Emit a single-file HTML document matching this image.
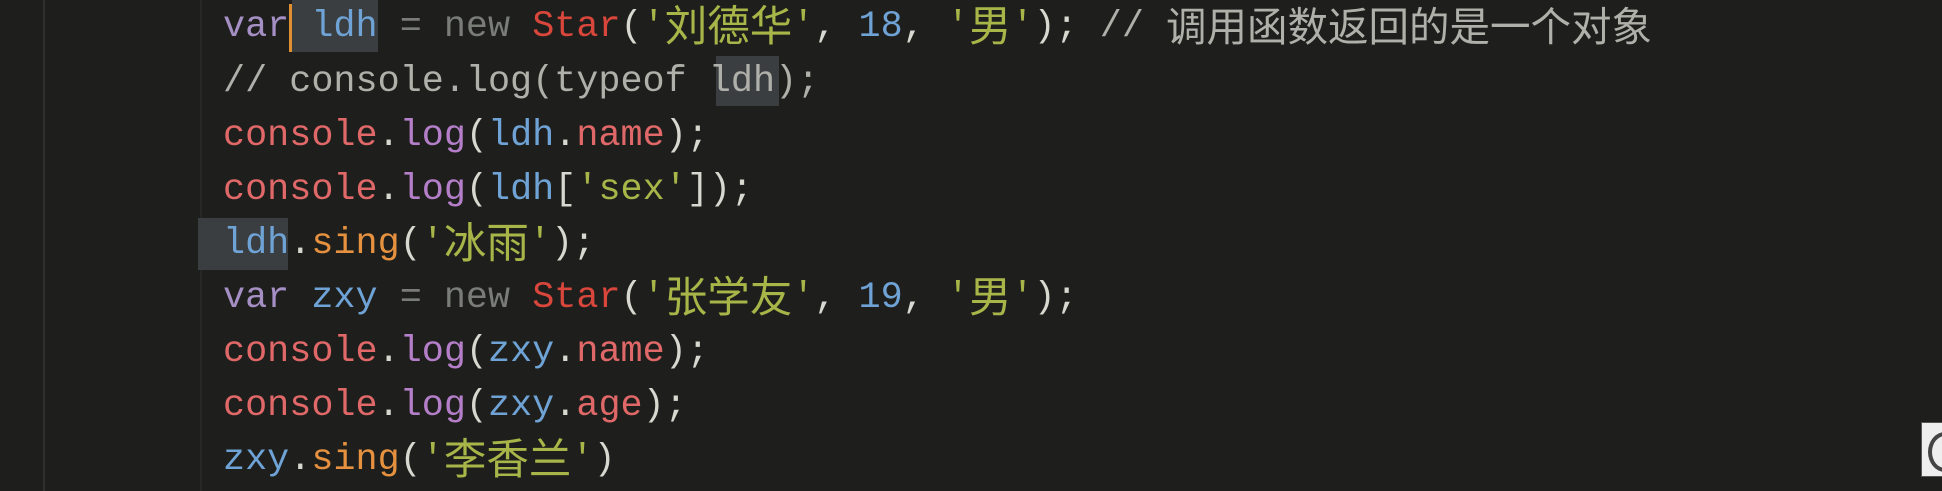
<!DOCTYPE html>
<html><head><meta charset="utf-8"><style>
html,body{margin:0;padding:0;}
body{width:1942px;height:491px;background:#1e1f1c;overflow:hidden;position:relative;font-family:"Liberation Mono","Noto Sans CJK SC",monospace;font-size:36.8px;}
.vl{position:absolute;top:0;height:491px;width:2px;background:#2e302c;}
.ln{position:absolute;left:223px;white-space:pre;height:54px;line-height:54px;color:#d8d8d0;}
.c{font-family:"Noto Sans CJK SC",sans-serif;font-size:42.5px;line-height:1px;position:relative;top:5px;}
.cc{font-family:"Noto Sans CJK SC",sans-serif;font-size:40.5px;line-height:1px;position:relative;top:5px;}
.kw{color:#a58fc4}.id{color:#6fa3d6}.op{color:#7a7c78}.cl{color:#d9463c}.st{color:#a8b548}
.cm{color:#b0b0aa}.co{color:#e06868}.lg{color:#b47fc8}.nm{color:#e06868}.sg{color:#e5913f}
</style></head><body>
<div class="vl" style="left:43px"></div>
<div class="vl" style="left:200px;background:#262823"></div>
<div style="position:absolute;left:292px;top:0px;width:86px;height:52px;background:#3b3e41"></div>
<div style="position:absolute;left:289px;top:4px;width:3px;height:48px;background:#e09030"></div>
<div style="position:absolute;left:716px;top:56px;width:63px;height:50px;background:#3b3e41"></div>
<div style="position:absolute;left:198px;top:218px;width:90px;height:52px;background:#3b3e41"></div>
<div class="ln" style="top:0px"><span class="kw">var</span> <span class="id">ldh</span> <span class="op">= new</span> <span class="cl">Star</span>(<span class="st">'<span class="c">刘德华</span>'</span>, <span class="id">18</span>, <span class="st">'<span class="c">男</span>'</span>); <span class="cm">// <span class="cc">调用函数返回的是一个对象</span></span></div>
<div class="ln" style="top:55px"><span class="cm">// console.log(typeof ldh);</span></div>
<div class="ln" style="top:109px"><span class="co">console</span>.<span class="lg">log</span>(<span class="id">ldh</span>.<span class="nm">name</span>);</div>
<div class="ln" style="top:163px"><span class="co">console</span>.<span class="lg">log</span>(<span class="id">ldh</span>[<span class="st">'sex'</span>]);</div>
<div class="ln" style="top:217px"><span class="id">ldh</span>.<span class="sg">sing</span>(<span class="st">'<span class="c">冰雨</span>'</span>);</div>
<div class="ln" style="top:271px"><span class="kw">var</span> <span class="id">zxy</span> <span class="op">= new</span> <span class="cl">Star</span>(<span class="st">'<span class="c">张学友</span>'</span>, <span class="id">19</span>, <span class="st">'<span class="c">男</span>'</span>);</div>
<div class="ln" style="top:325px"><span class="co">console</span>.<span class="lg">log</span>(<span class="id">zxy</span>.<span class="nm">name</span>);</div>
<div class="ln" style="top:379px"><span class="co">console</span>.<span class="lg">log</span>(<span class="id">zxy</span>.<span class="nm">age</span>);</div>
<div class="ln" style="top:433px"><span class="id">zxy</span>.<span class="sg">sing</span>(<span class="st">'<span class="c">李香兰</span>'</span>)</div>
<div style="position:absolute;left:1921px;top:422px;width:30px;height:53px;background:#eeeeee;border:1px solid #555"></div>
<div style="position:absolute;left:1928px;top:432px;width:26px;height:32px;border:4px solid #444;border-radius:50%"></div>
</body></html>
